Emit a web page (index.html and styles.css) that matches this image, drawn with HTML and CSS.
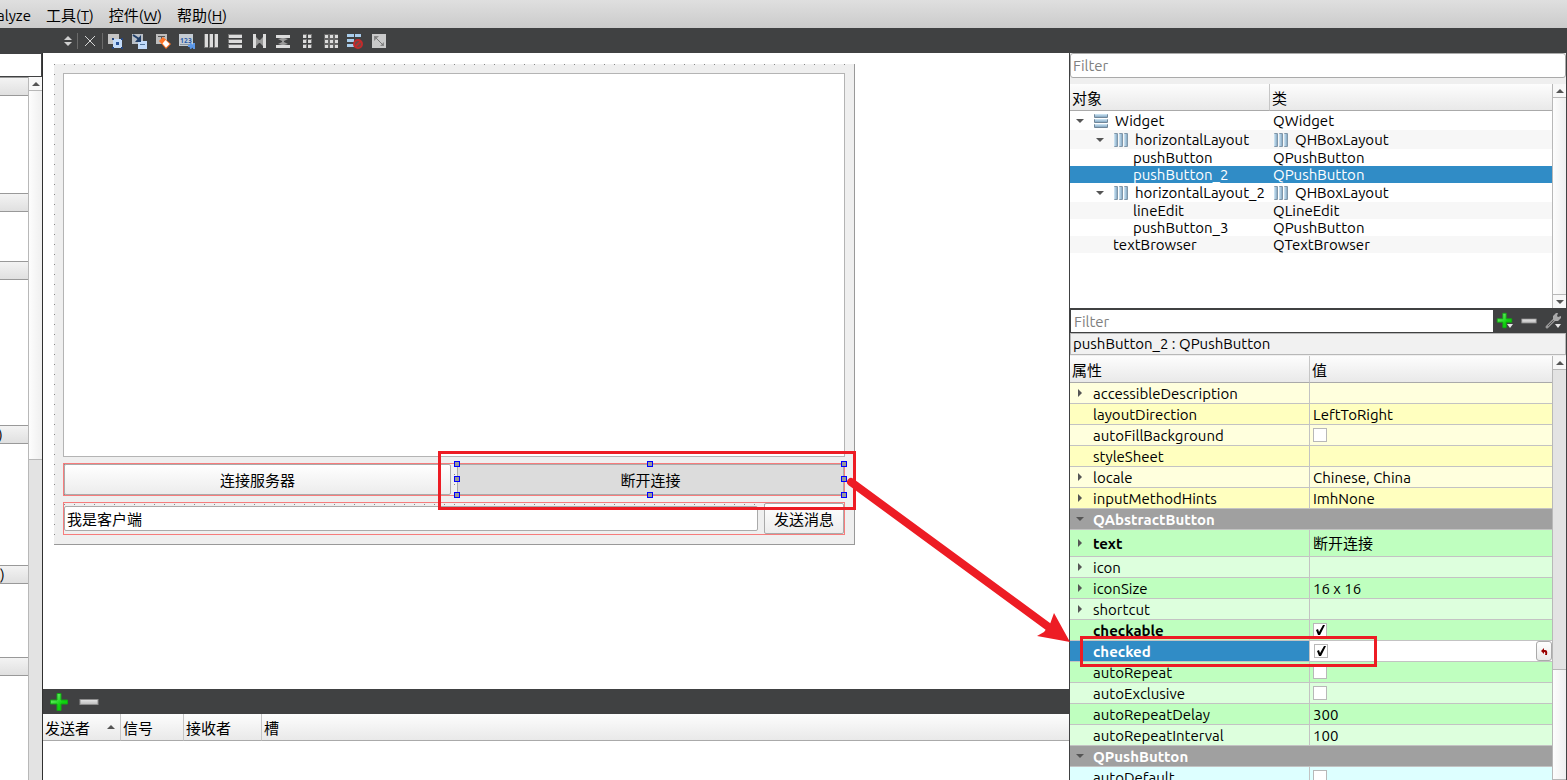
FILE: index.html
```
<!DOCTYPE html>
<html lang="zh-CN">
<head>
    <meta charset="UTF-8">
    <meta name="viewport" content="width=device-width, initial-scale=1.0">
    <title>Qt Designer</title>
    <link rel="stylesheet" href="styles.css">
</head>
<body>
    <!-- shared icons -->
    <svg class="defs" width="0" height="0">
        <defs>
            <linearGradient id="blue" x1="0" y1="0" x2="1" y2="0">
                <stop offset="0" stop-color="#d3eaf8"/><stop offset="1" stop-color="#86a9c4"/>
            </linearGradient>
            <linearGradient id="blue-v" x1="0" y1="0" x2="0" y2="1">
                <stop offset="0" stop-color="#d3eaf8"/><stop offset="1" stop-color="#86a9c4"/>
            </linearGradient>
            <linearGradient id="green" x1="0" y1="0" x2="1" y2="1">
                <stop offset="0" stop-color="#8df58d"/><stop offset="0.6" stop-color="#10d510"/><stop offset="1" stop-color="#08c808"/>
            </linearGradient>
            <linearGradient id="silver" x1="0" y1="0" x2="0" y2="1">
                <stop offset="0" stop-color="#e8e8e8"/><stop offset="1" stop-color="#bcbcbc"/>
            </linearGradient>
        </defs>
        <symbol id="hbox" viewBox="0 0 16 16">
            <g fill="#8096a8"><rect x="1" y="1" width="4" height="14" rx="1"/><rect x="6" y="1" width="4" height="14" rx="1"/><rect x="11" y="1" width="4" height="14" rx="1"/></g>
            <g fill="url(#blue)"><rect x="1" y="2" width="3" height="12"/><rect x="6" y="2" width="3" height="12"/><rect x="11" y="2" width="3" height="12"/></g>
        </symbol>
        <symbol id="vbox" viewBox="0 0 16 16">
            <g fill="#71879a"><rect x="1" y="1" width="14" height="4" rx="1"/><rect x="1" y="6" width="14" height="4" rx="1"/><rect x="1" y="11" width="14" height="4" rx="1"/></g>
            <g fill="url(#blue-v)"><rect x="2" y="1" width="12" height="3"/><rect x="2" y="6" width="12" height="3"/><rect x="2" y="11" width="12" height="3"/></g>
        </symbol>
        <symbol id="plus" viewBox="0 0 20 20">
            <path d="M8 1.500h4V8h6.500v4H12v6.500H8V12H1.500V8H8z" fill="url(#green)" stroke="#12a812"/>
        </symbol>
        <symbol id="minus" viewBox="0 0 20 20">
            <rect x="1" y="7.500" width="18" height="5" fill="url(#silver)" stroke="#8e8e8e"/>
        </symbol>
    </svg>

    <nav class="menubar">
        <button class="menu">alyze</button>
        <button class="menu">工具(<u>T</u>)</button>
        <button class="menu">控件(<u>W</u>)</button>
        <button class="menu">帮助(<u>H</u>)</button>
    </nav>

    <div class="toolbar">
        <button class="tool small" aria-label="Switch"><svg width="10" height="12" viewBox="0 0 10 12" fill="#d0d0d0"><path d="M1 5l4-4 4 4zM1 7l4 4 4-4z"/></svg></button>
        <i class="sep"></i>
        <button class="tool" aria-label="Close"><svg width="16" height="16" viewBox="0 0 16 16" stroke="#d5d5d5"><path d="M3 3l10 10M13 3L3 13"/></svg></button>
        <i class="sep"></i>
        <button class="tool" aria-label="Edit Widgets"><svg width="16" height="16" viewBox="0 0 16 16">
            <rect x="1" y="1" width="11" height="10" fill="#c4c4c4"/>
            <rect x="6" y="6" width="9" height="9" fill="#c2dbfa"/><rect x="9" y="9" width="3" height="3" fill="#26529b"/>
            <path d="M5 5h2v2H5zM14 5h2v2h-2zM5 14h2v2H5zM14 14h2v2h-2z" fill="#25457d"/></svg></button>
        <button class="tool" aria-label="Edit Signals/Slots"><svg width="16" height="16" viewBox="0 0 16 16">
            <rect x="1" y="1" width="11" height="10" fill="#b9bfc6"/><rect x="7" y="8" width="9" height="8" fill="#c2dbfa"/><path d="M9 11.500h5" stroke="#54789f"/>
            <path d="M2 2l6 4" stroke="#213f69" stroke-width="2"/><path d="M10 2v7H4z" fill="#213f69"/></svg></button>
        <button class="tool" aria-label="Edit Buddies"><svg width="16" height="16" viewBox="0 0 16 16">
            <rect x="1" y="1" width="11" height="10" fill="#bdbdbd"/><path d="M3 3.500h7M6.500 3v6" stroke="#555" fill="none"/>
            <path d="M4 8l4-4 8 7-5 5z" fill="#ff7528"/><path d="M10.500 7l4 4-3.500 3.500-3.500-4z" fill="#fff"/></svg></button>
        <button class="tool" aria-label="Edit Tab Order"><svg width="16" height="16" viewBox="0 0 16 16">
            <rect x="0" y="1" width="14" height="12" fill="#c4cbd3"/><path d="M1 11.500h12" stroke="#8b96a2"/>
            <text x="1" y="10" font-size="7" font-weight="bold" fill="#2458a8">123</text>
            <path d="M9 13h5M15 10v6M11 10.500l3 2.500-3 2.500" stroke="#5b98e8" stroke-width="2" fill="none"/></svg></button>
        <button class="tool" aria-label="Lay Out Horizontally"><svg width="16" height="16" viewBox="0 0 16 16" fill="#dcdcdc"><path d="M1 1h4v14H1zM6 1h4v14H6zM11 1h4v14h-4z" fill="#777"/><path d="M2 1h3v13H2zM7 1h3v13H7zM12 1h3v13h-3z"/></svg></button>
        <button class="tool" aria-label="Lay Out Vertically"><svg width="16" height="16" viewBox="0 0 16 16" fill="#dcdcdc"><path d="M1 1h14v4H1zM1 6h14v4H1zM1 11h14v4H1z" fill="#777"/><path d="M2 2h13v3H2zM2 7h13v3H2zM2 12h13v3H2z"/></svg></button>
        <button class="tool" aria-label="Horizontal Splitter"><svg width="16" height="16" viewBox="0 0 16 16"><path d="M2 1h3v14H2zM12 1h3v14h-3z" fill="#dcdcdc"/><path d="M5 4l3 3h1l3-3v9L9 10H8l-3 3z" fill="#9a9a9a"/></svg></button>
        <button class="tool" aria-label="Vertical Splitter"><svg width="16" height="16" viewBox="0 0 16 16"><path d="M1 2h14v3H1zM1 12h14v3H1z" fill="#dcdcdc"/><path d="M7 5h2l4 1-4 2v1l4 2-4 1H7l-4-1 4-2V8L3 6z" fill="#9a9a9a"/></svg></button>
        <button class="tool" aria-label="Form Layout"><svg width="16" height="16" viewBox="0 0 16 16" fill="#dcdcdc"><path d="M4 1h4v4H4zM9 1h4v4H9zM4 6h4v4H4zM9 6h4v4H9zM4 11h4v4H4zM9 11h4v4H9z" fill="#777"/><path d="M4 2h3v3H4zM9 2h3v3H9zM4 7h3v3H4zM9 7h3v3H9zM4 12h3v3H4zM9 12h3v3H9z"/></svg></button>
        <button class="tool" aria-label="Grid Layout"><svg width="16" height="16" viewBox="0 0 16 16" fill="#dcdcdc"><path d="M1 1h14v14H1z" fill="#666"/><path d="M2 2h3v3H2zM7 2h3v3H7zM12 2h3v3h-3zM2 7h3v3H2zM7 7h3v3H7zM12 7h3v3h-3zM2 12h3v3H2zM7 12h3v3H7zM12 12h3v3h-3z"/></svg></button>
        <button class="tool" aria-label="Break Layout"><svg width="16" height="16" viewBox="0 0 16 16">
            <path d="M0 1h7v3H0zM8 1h6v3H8zM0 6h7v3H0zM0 11h7v3H0z" fill="#a9cdec"/>
            <circle cx="11" cy="11" r="4" fill="#6b4a4a" stroke="#c22b2b" stroke-width="2"/><path d="M8 14l6-6" stroke="#c22b2b" stroke-width="2"/></svg></button>
        <button class="tool" aria-label="Adjust Size"><svg width="16" height="16" viewBox="0 0 16 16"><rect x="1" y="1" width="14" height="14" fill="#c9c9c9"/><path d="M3 3h5L3 8zM13 13H9l4-4z" fill="#888"/><path d="M4 4l8 8" stroke="#777"/></svg></button>
    </div>

    <div class="workspace">
        <aside class="widget-box">
            <input class="box-filter" type="text" aria-label="Filter widgets">
            <div class="box-body">
                <div class="box-list">
                    <h3></h3><div class="items-4"></div>
                    <h3></h3><div class="items-2"></div>
                    <h3></h3><div class="items-6"></div>
                    <h3 class="cut">)</h3><div class="items-5"></div>
                    <h3>)</h3><div class="items-3"></div>
                    <h3></h3>
                </div>
                <div class="scrollbar">
                    <button class="scroll-btn up" aria-label="Scroll up"></button>
                    <div class="thumb thumb-box"></div>
                </div>
            </div>
        </aside>

        <main class="center">
            <div class="canvas">
                <form class="form">
                    <div class="text-browser"></div>
                    <div class="hlayout">
                        <button type="button" class="push-button">连接服务器</button>
                        <div class="selected">
                            <button type="button" class="push-button down">断开连接</button>
                            <i class="handle l t"></i><i class="handle c t"></i><i class="handle r t"></i>
                            <i class="handle l m"></i><i class="handle r m"></i>
                            <i class="handle l b"></i><i class="handle c b"></i><i class="handle r b"></i>
                        </div>
                    </div>
                    <div class="hlayout">
                        <input class="line-edit" type="text" value="我是客户端" aria-label="消息">
                        <button type="button" class="push-button send">发送消息</button>
                    </div>
                </form>
            </div>
            <div class="signal-bar">
                <button class="tool" aria-label="Add"><svg width="20" height="20"><use href="#plus"/></svg></button>
                <button class="tool" aria-label="Remove"><svg width="20" height="20"><use href="#minus"/></svg></button>
            </div>
            <table class="signals">
                <thead>
                    <tr><th class="col-sender"><div class="sorted">发送者 <span class="arrow-up"></span></div></th><th class="col-signal">信号</th><th class="col-receiver">接收者</th><th>槽</th></tr>
                </thead>
            </table>
        </main>

        <aside class="inspector">
            <div class="filter-row"><input class="filter" type="text" placeholder="Filter" aria-label="Filter objects"></div>
            <div class="tree-area">
                <table class="tree">
                    <thead><tr><th class="col-object">对象</th><th>类</th></tr></thead>
                    <tbody>
                        <tr class="tall"><td><div class="cell"><span class="twisty open"></span><svg class="icon" width="16" height="16"><use href="#vbox"/></svg>Widget</div></td><td>QWidget</td></tr>
                        <tr class="tall alt"><td><div class="cell level-1"><span class="twisty open"></span><svg class="icon" width="16" height="16"><use href="#hbox"/></svg>horizontalLayout</div></td><td><div class="cell"><svg class="icon" width="16" height="16"><use href="#hbox"/></svg>QHBoxLayout</div></td></tr>
                        <tr><td><div class="cell level-2"><span class="twisty"></span>pushButton</div></td><td>QPushButton</td></tr>
                        <tr class="current"><td><div class="cell level-2"><span class="twisty"></span>pushButton_2</div></td><td>QPushButton</td></tr>
                        <tr class="tall"><td><div class="cell level-1"><span class="twisty open"></span><svg class="icon" width="16" height="16"><use href="#hbox"/></svg>horizontalLayout_2</div></td><td><div class="cell"><svg class="icon" width="16" height="16"><use href="#hbox"/></svg>QHBoxLayout</div></td></tr>
                        <tr class="alt"><td><div class="cell level-2"><span class="twisty"></span>lineEdit</div></td><td>QLineEdit</td></tr>
                        <tr><td><div class="cell level-2"><span class="twisty"></span>pushButton_3</div></td><td>QPushButton</td></tr>
                        <tr class="alt"><td><div class="cell level-1"><span class="twisty"></span>textBrowser</div></td><td>QTextBrowser</td></tr>
                    </tbody>
                </table>
                <div class="scrollbar">
                    <button class="scroll-btn up" aria-label="Scroll up"></button>
                    <div class="thumb"></div>
                    <button class="scroll-btn down" aria-label="Scroll down"></button>
                </div>
            </div>

            <div class="prop-bar">
                <input class="prop-filter" type="text" placeholder="Filter" aria-label="Filter properties">
                <button class="tool" aria-label="Add property"><svg width="18" height="18" viewBox="0 0 18 18"><use href="#plus" width="17" height="17"/><path d="M11 12h6l-3 4z" fill="#e6e6e6"/></svg></button>
                <button class="tool" aria-label="Remove property"><svg width="16" height="16"><use href="#minus"/></svg></button>
                <button class="tool" aria-label="Configure"><svg width="18" height="18" viewBox="0 0 18 18"><path d="M3 15L10 8" stroke="#999" stroke-width="3" stroke-linecap="round"/><path d="M4 14l6-6" stroke="#555"/><path d="M9 8V4l3-3h2l-1 3 1 1 3-1v2l-3 3h-3z" fill="#aaa"/><path d="M11 12h6l-3 4z" fill="#e6e6e6"/></svg></button>
            </div>
            <div class="object-name">pushButton_2 : QPushButton</div>
            <div class="prop-area">
                <table class="props">
                    <thead><tr><th class="col-name">属性</th><th>值</th></tr></thead>
                    <tbody>
                        <tr class="yellow"><td><div class="cell"><span class="twisty closed"></span>accessibleDescription</div></td><td></td></tr>
                        <tr class="yellow dark"><td><div class="cell"><span class="twisty"></span>layoutDirection</div></td><td>LeftToRight</td></tr>
                        <tr class="yellow"><td><div class="cell"><span class="twisty"></span><label for="autoFill">autoFillBackground</label></div></td><td><input type="checkbox" id="autoFill"></td></tr>
                        <tr class="yellow dark"><td><div class="cell"><span class="twisty"></span>styleSheet</div></td><td></td></tr>
                        <tr class="yellow"><td><div class="cell"><span class="twisty closed"></span>locale</div></td><td>Chinese, China</td></tr>
                        <tr class="yellow dark"><td><div class="cell"><span class="twisty closed"></span>inputMethodHints</div></td><td>ImhNone</td></tr>
                        <tr class="group"><th colspan="2"><div class="cell"><span class="twisty open"></span>QAbstractButton</div></th></tr>
                        <tr class="green dark cjk"><td><div class="cell"><span class="twisty closed"></span><b>text</b></div></td><td>断开连接</td></tr>
                        <tr class="green"><td><div class="cell"><span class="twisty closed"></span>icon</div></td><td></td></tr>
                        <tr class="green dark"><td><div class="cell"><span class="twisty closed"></span>iconSize</div></td><td>16 x 16</td></tr>
                        <tr class="green"><td><div class="cell"><span class="twisty closed"></span>shortcut</div></td><td></td></tr>
                        <tr class="green dark"><td><div class="cell"><span class="twisty"></span><label for="checkable"><b>checkable</b></label></div></td><td><input type="checkbox" id="checkable" checked></td></tr>
                        <tr class="editing"><td><div class="cell"><span class="twisty"></span><label for="checked"><b>checked</b></label></div></td><td><div class="editor"><input type="checkbox" id="checked" checked><button class="reset" aria-label="Reset"><svg width="9" height="9" viewBox="0 0 9 9"><path d="M1 4l3-3v2h1q3 0 2 5H5q1-3-1-3v2z" fill="#900"/></svg></button></div></td></tr>
                        <tr class="green dark"><td><div class="cell"><span class="twisty"></span><label for="autoRepeat">autoRepeat</label></div></td><td><input type="checkbox" id="autoRepeat"></td></tr>
                        <tr class="green"><td><div class="cell"><span class="twisty"></span><label for="autoExclusive">autoExclusive</label></div></td><td><input type="checkbox" id="autoExclusive"></td></tr>
                        <tr class="green dark"><td><div class="cell"><span class="twisty"></span>autoRepeatDelay</div></td><td>300</td></tr>
                        <tr class="green"><td><div class="cell"><span class="twisty"></span>autoRepeatInterval</div></td><td>100</td></tr>
                        <tr class="group"><th colspan="2"><div class="cell"><span class="twisty open"></span>QPushButton</div></th></tr>
                        <tr class="cyan"><td><div class="cell"><span class="twisty"></span><label for="autoDefault">autoDefault</label></div></td><td><input type="checkbox" id="autoDefault"></td></tr>
                    </tbody>
                </table>
                <div class="scrollbar">
                    <button class="scroll-btn up" aria-label="Scroll up"></button>
                    <div class="track"></div>
                    <div class="thumb thumb-prop"></div>
                </div>
            </div>
        </aside>
    </div>

    <!-- red marks over the window -->
    <svg class="marks" width="1400" height="700" fill="none" stroke="#ed1c24" stroke-width="3">
        <rect x="439.500" y="452.500" width="415" height="56"/>
        <rect x="1081.500" y="637.500" width="294" height="28"/>
        <path d="M851 482L1050 628" stroke-width="8" stroke-linecap="round"/>
        <path d="M1070 642L1054 613 1050 624 1044 632 1037 636z" fill="#ed1c24" stroke="none"/>
    </svg>
</body>
</html>
```
FILE: styles.css
```
* {
    box-sizing: border-box;
}

body {
    display: flex;
    flex-direction: column;
    height: 100vh;
    margin: 0;
    overflow: hidden;
    background-color: white;
    color: black;
    font-family: Ubuntu, "Noto Sans", "Noto Sans CJK SC", sans-serif;
    font-size: 15px;
    line-height: 17px;
}

button, input {
    font: inherit;
    color: inherit;
}

button {
    padding: 0;
    border: none;
    background: none;
}

input {
    outline: none;
}

.defs {
    position: absolute;
}

/* Menu and toolbar */
.menubar {
    display: flex;
    flex: none;
    gap: 15px;
    height: 28px;
    padding-top: 2px;
    background: linear-gradient(#dfdfdf, #cbcbcb);
}

.menu:first-child {
    margin-left: -3px;
}

.menu u {
    text-underline-offset: 2px;
}

.toolbar {
    display: flex;
    flex: none;
    align-items: center;
    height: 25px;
    padding-left: 59px;
    background-color: #404142;
}

.tool {
    display: flex;
    align-items: center;
    justify-content: center;
    width: 24px;
    height: 24px;
}

.tool.small {
    width: 18px;
}

.sep {
    width: 1px;
    height: 16px;
    background-color: #6a6a6a;
}

.workspace {
    display: flex;
    flex: 1;
    min-height: 0;
}

/* Scrollbars */
.scrollbar {
    display: flex;
    flex-direction: column;
    flex: none;
    width: 14px;
    background-color: #e3e3e3;
    border-left: 1px solid #b8b8b8;
}

.scroll-btn {
    display: flex;
    flex: none;
    align-items: center;
    justify-content: center;
    height: 13px;
    background-color: #f8f8f8;
}

.scroll-btn::before {
    content: "";
    border: 4px solid transparent;
}

.scroll-btn.up::before {
    border-top: none;
    border-bottom-color: #555;
}

.scroll-btn.down::before {
    border-bottom: none;
    border-top-color: #555;
}

.thumb {
    flex: 1;
    background: linear-gradient(90deg, #fdfdfd, #efefef);
    border: solid #b8b8b8;
    border-width: 1px 0;
}

.thumb-box {
    flex: none;
    height: 370px;
}

.track {
    height: 300px;
    border-top: 1px solid #b8b8b8;
}

/* Widget box */
.widget-box {
    display: flex;
    flex-direction: column;
    flex: none;
    width: 43px;
    border-right: 1px solid #303030;
}

.box-filter {
    width: 100%;
    height: 24px;
    border: solid #404142;
    border-width: 1px 1px 1px 0;
}

.box-body {
    display: flex;
    flex: 1;
    min-height: 0;
}

.box-list {
    flex: 1;
    overflow: hidden;
}

.box-list h3 {
    height: 19px;
    margin: 0;
    border: solid #999;
    border-width: 1px 0;
    background: linear-gradient(#f3f3f3, #e0e0e0);
    font-size: 15px;
    font-weight: normal;
    line-height: 17px;
}

.box-list .cut {
    text-indent: -2px;
}

.items-2 {
    height: 49px;
}

.items-3 {
    height: 73px;
}

.items-4 {
    height: 97px;
}

.items-5 {
    height: 121px;
}

.items-6 {
    height: 145px;
}

/* Form editor */
.center {
    display: flex;
    flex-direction: column;
    flex: 1;
    min-width: 0;
}

.canvas {
    flex: 1;
    min-height: 0;
    padding: 11px;
}

.form {
    display: flex;
    flex-direction: column;
    gap: 6px;
    width: 801px;
    padding: 9px;
    border: solid #999;
    border-width: 0 1px 1px 0;
    background-image: linear-gradient(90deg, transparent 1px, #efefef 1px), linear-gradient(#888 1px, #efefef 1px);
    background-size: 10px 10px;
}

.text-browser {
    height: 384px;
    border: 1px solid #b4b4b4;
    background-color: white;
}

.hlayout {
    display: flex;
    align-items: center;
    gap: 6px;
    height: 33px;
    border: 1px solid #f67c7c;
}

.push-button {
    flex: 1 1 50%;
    height: 31px;
    padding-top: 1px;
    border: 1px solid #aaa;
    border-radius: 2px;
    background: linear-gradient(#fff, #ececec);
}

.push-button.down {
    background: #dcdcdc;
}

.push-button.send {
    flex: none;
    width: 80px;
}

.selected {
    position: relative;
    display: flex;
    flex: 1 1 50%;
}

.line-edit {
    flex: 1;
    min-width: 0;
    height: 25px;
    padding: 0 2px;
    border: 1px solid #aaa;
    border-radius: 2px;
}

.handle {
    position: absolute;
    width: 6px;
    height: 6px;
    border: 1px solid blue;
    background-color: #999;
}

.handle.l {
    left: -3px;
}

.handle.c {
    left: calc(50% - 4px);
}

.handle.r {
    right: -3px;
}

.handle.t {
    top: -3px;
}

.handle.m {
    top: calc(50% - 4px);
}

.handle.b {
    bottom: -3px;
}

/* Tables */
table {
    width: 100%;
    border-spacing: 0;
    table-layout: fixed;
}

th, td {
    padding: 0 3px;
    text-align: left;
    white-space: nowrap;
}

thead th {
    height: 27px;
    padding: 2px 2px 0;
    border: solid #c6c6c6;
    border-width: 0 1px 1px 0;
    border-bottom-color: #aaa;
    background: linear-gradient(#fdfdfd, #e9e9e9);
    font-weight: normal;
}

thead th:last-child {
    border-right: none;
}

.signal-bar {
    display: flex;
    flex: none;
    align-items: center;
    gap: 6px;
    height: 25px;
    padding-left: 4px;
    background-color: #404142;
}

.signals {
    flex: none;
    margin-bottom: 39px;
}

.col-sender {
    width: 78px;
}

.col-signal {
    width: 63px;
}

.col-receiver {
    width: 78px;
}

.sorted {
    display: flex;
    justify-content: space-between;
    padding-right: 3px;
}

.arrow-up {
    height: 4px;
    margin-top: 5px;
    border: 4px solid transparent;
    border-top: none;
    border-bottom-color: #555;
}

/* Object inspector and property editor */
.inspector {
    display: flex;
    flex-direction: column;
    flex: none;
    width: 498px;
    border: solid #404142;
    border-width: 0 1px;
    background-color: #efefef;
}

.filter-row {
    height: 31px;
}

.filter {
    display: block;
    width: 100%;
    height: 25px;
    padding: 0 2px;
    border: 1px solid #aaa;
    border-radius: 3px;
}

::placeholder {
    color: #808080;
    opacity: 1;
}

.tree-area {
    display: flex;
    align-items: stretch;
    height: 224px;
    background-color: white;
}

.tree, .props {
    align-self: flex-start;
    flex: 1;
}

.tree td {
    height: 17px;
}

.tree .tall td {
    height: 19px;
}

.tree .alt {
    background-color: #f7f7f7;
}

.tree .current {
    background-color: #308cc6;
    color: white;
}

.col-object {
    width: 200px;
}

.cell {
    display: flex;
    align-items: center;
}

td:first-child, .group th {
    padding: 0;
}

.level-1 {
    padding-left: 20px;
}

.level-2 {
    padding-left: 40px;
}

.icon {
    margin-right: 6px;
}

.twisty {
    display: flex;
    align-items: center;
    justify-content: center;
    width: 20px;
    height: 8px;
    margin-right: 3px;
}

.twisty.open::before {
    content: "";
    border: 4px solid transparent;
    border-top-color: #555;
    border-bottom: none;
}

.twisty.closed::before {
    content: "";
    border: 4px solid transparent;
    border-left-color: #555;
    border-right: none;
}

.prop-bar {
    display: flex;
    align-items: center;
    flex: none;
    height: 25px;
    padding: 0 1px;
    background-color: #404142;
}

.prop-filter {
    flex: 1;
    height: 22px;
    padding: 1px 3px 0;
    border: none;
}

.object-name {
    flex: none;
    height: 22px;
    margin-bottom: 1px;
    padding: 1px 2px;
    border: 1px solid #b8b8b8;
    background-color: #f1f1f1;
}

.prop-area {
    display: flex;
    flex: 1;
    min-height: 0;
    overflow: hidden;
}

.props td, .group th {
    height: 21px;
    border-bottom: 1px solid #c3c3c3;
}

.props .cjk td {
    height: 27px;
}

.props td:first-child {
    border-right: 1px solid #c3c3c3;
}

.col-name {
    width: 240px;
}

.yellow {
    background-color: #ffffdd;
}

.yellow.dark {
    background-color: #ffffbf;
}

.green {
    background-color: #ddffdd;
}

.green.dark {
    background-color: #bfffbf;
}

.cyan {
    background-color: #ddffff;
}

.group {
    background-color: #a0a0a0;
    color: white;
}

.editing {
    background-color: white;
}

.editing td:first-child {
    background-color: #308cc6;
    color: white;
}

.props .editing td:last-child {
    padding: 0 0 0 4px;
}

.editor {
    display: flex;
    align-items: center;
    justify-content: space-between;
}

.reset {
    display: flex;
    align-items: center;
    justify-content: center;
    width: 16px;
    height: 20px;
    border: 1px solid #aaa;
    border-radius: 3px;
    background: linear-gradient(#fff, #eaeaea);
}

input[type="checkbox"] {
    appearance: none;
    display: block;
    width: 14px;
    height: 14px;
    margin: 0;
    border: 1px solid #b8b8b8;
    background-color: white;
}

input[type="checkbox"]:checked::before {
    content: "";
    display: block;
    width: 12px;
    height: 12px;
    background-color: black;
    clip-path: polygon(2px 6px, 4px 5px, 5px 8px, 9px 1px, 11px 1px, 6px 11px, 4px 11px);
}

.marks {
    position: absolute;
    top: 0;
    left: 0;
    pointer-events: none;
}
```
